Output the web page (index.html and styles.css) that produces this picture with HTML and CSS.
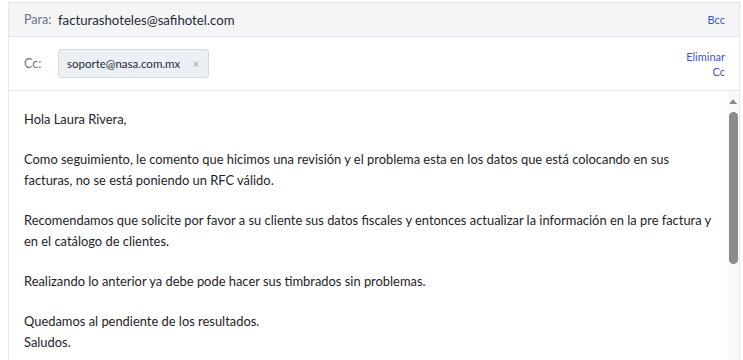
FILE: index.html
```html
<!DOCTYPE html>
<html lang="es">
<head>
    <meta charset="UTF-8">
    <title>Responder correo</title>
    <link rel="stylesheet" href="styles.css">
</head>
<body>
    <div class="composer">
        <div class="field-row to-row">
            <span class="label">Para:</span>
            <span class="to-address">facturashoteles@safihotel.com</span>
            <a class="action">Bcc</a>
        </div>
        <div class="field-row cc-row">
            <span class="label">Cc:</span>
            <div class="chips">
                <span class="chip">soporte@nasa.com.mx <span class="chip-close">×</span></span>
            </div>
            <a class="action">Eliminar<br>Cc</a>
        </div>
        <div class="body-area">
            <div class="message">
                <p>Hola Laura Rivera,</p>
                <p>Como seguimiento, le comento que hicimos una revisión y el problema esta en los datos que está colocando en sus facturas, no se está poniendo un RFC válido.</p>
                <p>Recomendamos que solicite por favor a su cliente sus datos fiscales y entonces actualizar la información en la pre factura y en el catálogo de clientes.</p>
                <p>Realizando lo anterior ya debe pode hacer sus timbrados sin problemas.</p>
                <p>Quedamos al pendiente de los resultados.<br>Saludos.</p>
            </div>
            <div class="scrollbar">
                <span class="scroll-up"></span>
                <span class="scroll-thumb"></span>
            </div>
        </div>
    </div>
</body>
</html>
```

FILE: styles.css
```css
html, body {
    margin: 0;
    height: 100%;
    overflow: hidden;
    background: #fff;
    font-family: Lato, "Open Sans", sans-serif;
    color: #1f2328;
}

.composer {
    margin: 2px 3px 0 8px;
    border: 1px solid #e4e7ee;
    border-bottom: none;
    display: flex;
    flex-direction: column;
}

.field-row {
    display: flex;
    align-items: center;
    padding: 0 14px 0 15px;
    border-bottom: 1px solid #e4e7ee;
}

.to-row {
    height: 33px;
    background: #f4f5f7;
}

.cc-row {
    height: 53px;
}

.label {
    width: 34px;
    font-size: 12.5px;
    color: #6b7280;
}

.to-address {
    flex-grow: 1;
    font-size: 13.2px;
    color: #1f2a37;
}

.chips {
    flex-grow: 1;
    display: flex;
}

.chip {
    display: inline-flex;
    align-items: center;
    height: 27px;
    padding: 0 9px 0 8px;
    background: #eceff3;
    border: 1px solid #d5d9e0;
    border-radius: 3px;
    font-size: 11.5px;
    color: #1f2a37;
}

.chip-close {
    margin-left: 12px;
    color: #9ca3af;
    font-size: 12px;
}

.action {
    font-size: 11px;
    line-height: 15px;
    color: #3b55d0;
    text-align: right;
    cursor: pointer;
}

.body-area {
    display: flex;
    height: 300px;
}

.message {
    flex-grow: 1;
    padding: 18px 8px 0 15px;
    font-size: 12.9px;
    line-height: 21px;
}

.message p {
    margin: 0 0 19px;
}

.scrollbar {
    width: 15px;
    background: #fafafa;
    display: flex;
    flex-direction: column;
    align-items: center;
}

.scroll-up {
    margin-top: 8px;
    width: 0;
    height: 0;
    border-left: 4px solid transparent;
    border-right: 4px solid transparent;
    border-bottom: 5px solid #8a8a8a;
}

.scroll-thumb {
    margin-top: 8px;
    width: 9px;
    height: 152px;
    border-radius: 5px;
    background: #8a8a8a;
}
```
